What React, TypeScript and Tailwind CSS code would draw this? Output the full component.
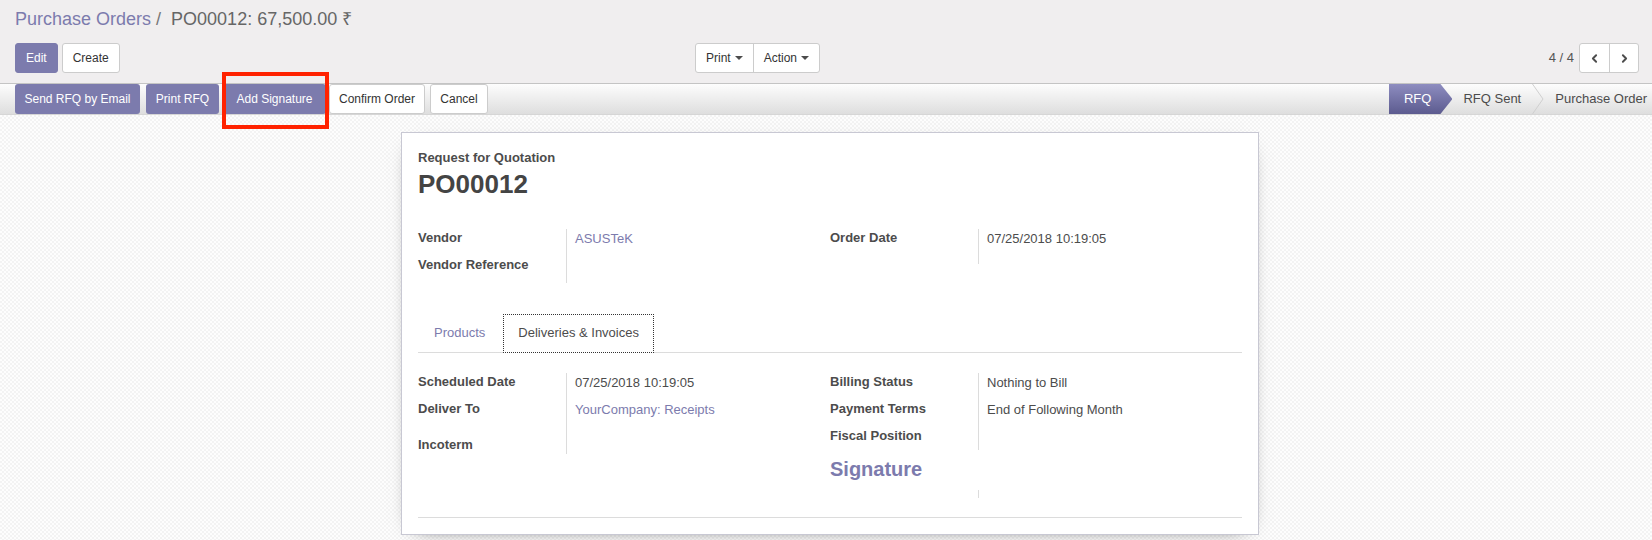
import { ChevronLeft, ChevronRight } from "lucide-react";
import type { ReactNode } from "react";

function Field({
  label,
  children,
  className = "h-[27px]",
}: {
  label: string;
  children?: ReactNode;
  className?: string;
}) {
  return (
    <div className={`flex ${className}`}>
      <div className="w-[148px] shrink-0 font-bold leading-[18px]">{label}</div>
      <div className="flex-1 border-l border-[#dcdcdc] pl-[8px] pt-[1px] leading-[18px]">
        {children}
      </div>
    </div>
  );
}

function Caret() {
  return (
    <span className="ml-[4px] inline-block h-0 w-0 border-x-[4px] border-t-[4px] border-x-transparent border-t-[#4c4c4c] align-middle" />
  );
}

export default function App() {
  return (
    <div className="relative flex h-[540px] w-[1652px] flex-col overflow-hidden font-['Liberation_Sans',Arial,sans-serif] text-[#4c4c4c]">
      {/* control panel */}
      <div className="h-[83px] shrink-0 bg-[#f0eeef] pl-[15px] pr-[13px] pt-[7px]">
        <div className="flex text-[18px] leading-[24px]">
          <span className="text-[#7c7bad]">Purchase Orders</span>
          <span className="ml-[5px] text-[#777]">/</span>
          <span className="ml-[10px] text-[#666]">PO00012: 67,500.00 ₹</span>
        </div>
        <div className="mt-[12px] flex h-[30px] items-center text-[12px]">
          <div className="flex w-[680px] gap-[4px]">
            <button className="h-[30px] rounded-[3px] border border-[#7c7bad] bg-[#7c7bad] px-[10px] text-white">
              Edit
            </button>
            <button className="h-[30px] rounded-[3px] border border-[#cccccc] bg-white px-[10px] text-[#333]">
              Create
            </button>
          </div>
          <div className="flex h-[30px] rounded-[3px] border border-[#cccccc] bg-white text-[#333]">
            <button className="flex items-center px-[10px]">
              Print
              <Caret />
            </button>
            <button className="flex items-center border-l border-[#cccccc] px-[10px]">
              Action
              <Caret />
            </button>
          </div>
          <div className="ml-auto flex items-center">
            <span className="text-[13px] text-[#555]">4 / 4</span>
            <div className="ml-[5px] flex h-[30px] rounded-[3px] border border-[#cccccc] bg-white">
              <button className="flex w-[29px] items-center justify-center">
                <ChevronLeft size={13} strokeWidth={3.5} color="#4c4c4c" />
              </button>
              <button className="flex w-[29px] items-center justify-center border-l border-[#cccccc]">
                <ChevronRight size={13} strokeWidth={3.5} color="#4c4c4c" />
              </button>
            </div>
          </div>
        </div>
      </div>

      {/* status bar */}
      <div className="flex h-[32px] shrink-0 border-y border-t-[#c4c4c4] border-b-[#d6d6d6] bg-linear-to-b from-[#fdfdfd] to-[#dedede] pl-[15px]">
        <div className="flex text-[12px]">
          <button className="w-[125px] rounded-[3px] bg-[#7c7bad] text-white">Send RFQ by Email</button>
          <button className="ml-[6px] w-[73px] rounded-[3px] bg-[#7c7bad] text-white">Print RFQ</button>
          <button className="ml-[4px] w-[103px] rounded-[3px] bg-[#7c7bad] text-white">Add Signature</button>
          <button className="ml-[3px] w-[96px] rounded-[3px] border border-[#cccccc] bg-white text-[#333]">
            Confirm Order
          </button>
          <button className="ml-[5px] w-[58px] rounded-[3px] border border-[#cccccc] bg-white text-[#333]">
            Cancel
          </button>
        </div>
        <div className="ml-auto flex items-stretch text-[13px]">
          <div className="flex items-center bg-linear-to-b from-[#8e8dc0] to-[#5c5b8f] pl-[15px] pr-[21px] text-white [clip-path:polygon(0_0,calc(100%-12px)_0,100%_50%,calc(100%-12px)_100%,0_100%)]">
            RFQ
          </div>
          <div className="flex items-center pl-[11px] text-[#4c4c4c]">RFQ Sent</div>
          <svg width="12" height="30" viewBox="0 0 12 30" className="ml-[11px]">
            <polyline points="0.5,0 11,15 0.5,30" fill="none" stroke="#cfcfcf" strokeWidth="1" />
          </svg>
          <div className="flex items-center pl-[11px] pr-[5px] text-[#4c4c4c]">Purchase Order</div>
        </div>
      </div>

      {/* sheet area */}
      <div className="flex flex-1 justify-center bg-[#fbfbfb] bg-[image:repeating-conic-gradient(#f3f3f3_0_25%,#fdfdfd_0_50%)] bg-[length:4px_4px] pl-[8px] pt-[17px]">
        <div className="h-fit w-[858px] border border-[#c8c8d3] bg-white px-[16px] pb-[16px] pt-[16px] text-[13px] shadow-[0_5px_20px_-15px_rgba(0,0,0,1)]">
          <div className="font-bold leading-[17px]">Request for Quotation</div>
          <div className="mt-[3px] text-[26px] font-bold leading-[30px] text-[#444]">PO00012</div>

          <div className="mt-[30px] flex items-start">
            <div className="w-1/2">
              <Field label="Vendor">
                <span className="text-[#7c7bad]">ASUSTeK</span>
              </Field>
              <Field label="Vendor Reference" />
            </div>
            <div className="w-1/2">
              <Field label="Order Date" className="h-[35px]">
                07/25/2018 10:19:05
              </Field>
            </div>
          </div>

          <div className="mt-[31px] flex h-[39px] gap-[2px] border-b border-[#dcdcdc]">
            <div className="h-[38px] border border-transparent px-[15px] leading-[36px] text-[#7c7bad]">
              Products
            </div>
            <div className="h-[39px] border border-dotted border-[#333] bg-white px-[14px] leading-[36px] text-[#4c4c4c]">
              Deliveries &amp; Invoices
            </div>
          </div>

          <div className="mt-[20px] flex h-[145px] items-start border-b border-[#dcdcdc]">
            <div className="w-1/2">
              <Field label="Scheduled Date">07/25/2018 10:19:05</Field>
              <Field label="Deliver To" className="h-[36px]">
                <span className="text-[#7c7bad]">YourCompany: Receipts</span>
              </Field>
              <Field label="Incoterm" className="h-[18px]" />
            </div>
            <div className="w-1/2">
              <Field label="Billing Status">Nothing to Bill</Field>
              <Field label="Payment Terms">End of Following Month</Field>
              <Field label="Fiscal Position" className="h-[23px]" />
              <div className="h-[40px] pt-[7px] text-[20px] font-bold leading-[24px] text-[#7c7bad]">
                Signature
              </div>
              <Field label="" className="h-[8px]" />
            </div>
          </div>
        </div>
      </div>

      {/* highlight annotation */}
      <div className="absolute left-[222px] top-[72px] h-[57px] w-[107px] border-[4px] border-[#ff2200]" />
    </div>
  );
}
